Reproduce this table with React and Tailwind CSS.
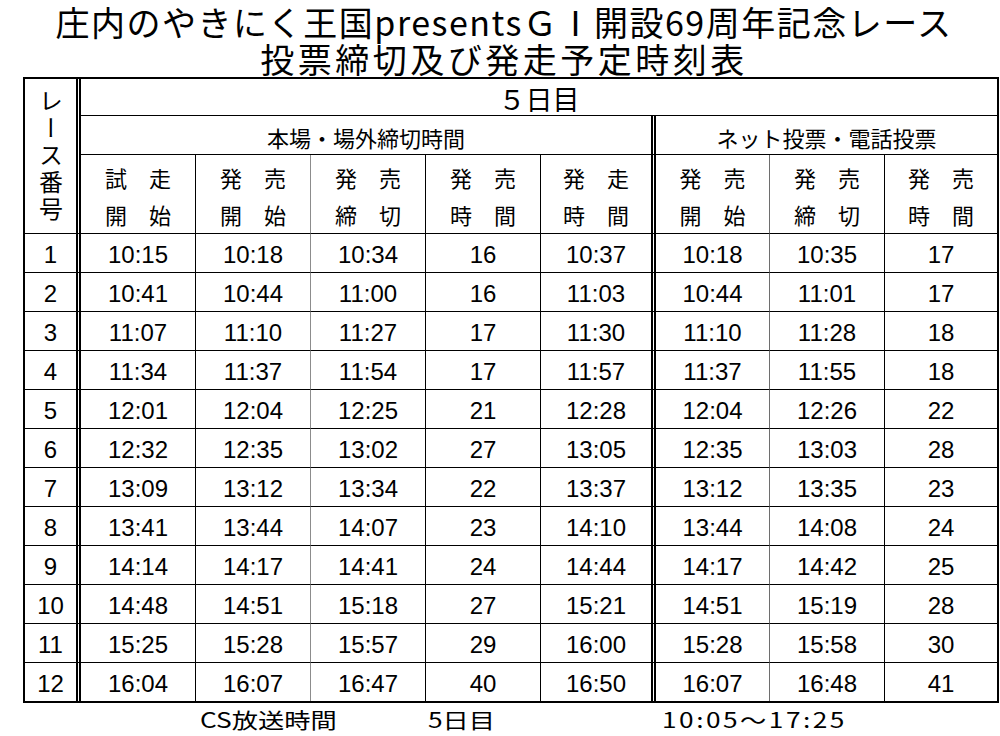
import React from "react";

const jp = "font-['Noto_Sans_CJK_JP',sans-serif]";
const num = "font-['Liberation_Sans',Arial,sans-serif]";

const rows = [
  ["1", "10:15", "10:18", "10:34", "16", "10:37", "10:18", "10:35", "17"],
  ["2", "10:41", "10:44", "11:00", "16", "11:03", "10:44", "11:01", "17"],
  ["3", "11:07", "11:10", "11:27", "17", "11:30", "11:10", "11:28", "18"],
  ["4", "11:34", "11:37", "11:54", "17", "11:57", "11:37", "11:55", "18"],
  ["5", "12:01", "12:04", "12:25", "21", "12:28", "12:04", "12:26", "22"],
  ["6", "12:32", "12:35", "13:02", "27", "13:05", "12:35", "13:03", "28"],
  ["7", "13:09", "13:12", "13:34", "22", "13:37", "13:12", "13:35", "23"],
  ["8", "13:41", "13:44", "14:07", "23", "14:10", "13:44", "14:08", "24"],
  ["9", "14:14", "14:17", "14:41", "24", "14:44", "14:17", "14:42", "25"],
  ["10", "14:48", "14:51", "15:18", "27", "15:21", "14:51", "15:19", "28"],
  ["11", "15:25", "15:28", "15:57", "29", "16:00", "15:28", "15:58", "30"],
  ["12", "16:04", "16:07", "16:47", "40", "16:50", "16:07", "16:48", "41"],
];

const heads = [
  ["試　走", "開　始"],
  ["発　売", "開　始"],
  ["発　売", "締　切"],
  ["発　売", "時　間"],
  ["発　走", "時　間"],
  ["発　売", "開　始"],
  ["発　売", "締　切"],
  ["発　売", "時　間"],
];

// right edge of each column (0 = race number)
const rightBorder = [
  "border-r-[5px] border-double border-r-black",
  "border-r border-r-black",
  "border-r border-r-[#8c8c8c]",
  "border-r border-r-black",
  "border-r border-r-black",
  "border-r-[5px] border-double border-r-black",
  "border-r border-r-[#6e6e6e]",
  "border-r border-r-black",
  "",
];

export default function App() {
  return (
    <div className={`w-[1000px] h-[736px] bg-white text-black overflow-hidden ${jp}`}>
      {/* title */}
      <div className="pt-[3px] pl-[8px] text-center whitespace-nowrap">
        <div className="text-[34px] leading-[37px] tracking-[1.5px]">
          庄内のやきにく王国presentsＧⅠ開設69周年記念レース
        </div>
        <div className="text-[34px] leading-[37px] tracking-[3.5px]">投票締切及び発走予定時刻表</div>
      </div>

      {/* table */}
      <div className="ml-[23px] w-[976px] border-2 border-black">
        <div className="grid grid-cols-[56px_115px_115px_115px_115px_115px_114px_115px_112px] grid-rows-[37px_39px_79px_repeat(11,39px)_38px]">
          <div className="row-span-3 flex items-center justify-center border-b border-b-black border-r-[5px] border-double border-r-black">
            <span className="[writing-mode:vertical-rl] text-[24px] leading-none tracking-[3px]">
              レース番号
            </span>
          </div>
          <div className="col-span-8 flex items-center justify-center border-b border-b-black pt-[2px] text-[27px] leading-none">
            ５日目
          </div>
          <div className="col-span-5 flex items-center justify-center border-b border-b-black border-r-[5px] border-double border-r-black pt-[4px] text-[22px] leading-none">
            本場・場外締切時間
          </div>
          <div className="col-span-3 flex items-center justify-center border-b border-b-black pt-[4px] text-[22px] leading-none">
            ネット投票・電話投票
          </div>
          {heads.map((h, i) => (
            <div
              key={i}
              className={`flex flex-col items-center justify-center border-b border-b-black pt-[4px] text-[22px] leading-[37px] ${rightBorder[i + 1]}`}
            >
              <span>{h[0]}</span>
              <span>{h[1]}</span>
            </div>
          ))}
          {rows.map((r, ri) =>
            r.map((v, ci) => (
              <div
                key={ri + "-" + ci}
                className={`flex items-center justify-center pt-[3px] text-[24px] leading-none ${num} ${
                  ri < rows.length - 1 ? "border-b border-b-black" : ""
                } ${rightBorder[ci]}`}
              >
                {v}
              </div>
            ))
          )}
        </div>
      </div>

      {/* footer */}
      <div className="flex h-[33px] items-center text-[21px] leading-none">
        <span className="ml-[200px] w-[228px]">
          <span className="inline-block origin-left scale-x-125">CS放送時間</span>
        </span>
        <span className="w-[234px]">
          <span className="inline-block origin-left scale-x-125">5日目</span>
        </span>
        <span>
          <span className="inline-block origin-left scale-x-125 tracking-[2px]">10:05～17:25</span>
        </span>
      </div>
    </div>
  );
}
